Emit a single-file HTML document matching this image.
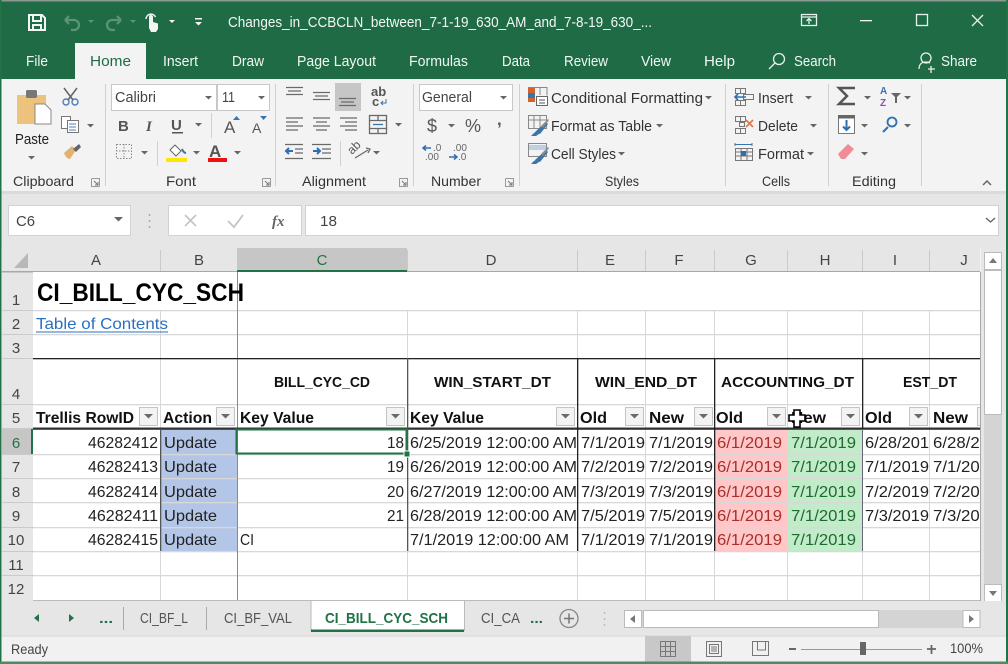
<!DOCTYPE html>
<html><head><meta charset="utf-8">
<style>
html,body{margin:0;padding:0;width:1008px;height:664px;overflow:hidden;background:#f3f3f3}
svg{display:block;filter:blur(.35px)}
text{font-family:"Liberation Sans",sans-serif;fill:#333;font-size:15px}
.w text{fill:#f2f7f4}
.c text{fill:#222;font-size:16px}
.b text{fill:#111;font-weight:bold;font-size:16px}
.r text{fill:#a8302c;font-size:16px}
.g text{fill:#1d6b2e;font-size:16px}
.h text{fill:#444;font-size:15px;text-anchor:middle}
.n text{fill:#444;font-size:15px;text-anchor:middle}
</style></head><body>
<svg width="1008" height="664" viewBox="0 0 1008 664" xmlns="http://www.w3.org/2000/svg">
<defs>
<clipPath id="grid"><rect x="33" y="272" width="947" height="329"/></clipPath>
<symbol id="dd" overflow="visible"><path d="M0 0h7l-3.500 3.500z" fill="#666"/></symbol>
<symbol id="fb" overflow="visible"><rect x=".5" y=".5" width="18" height="18" fill="#f3f3f3" stroke="#c4c4c4"/><path d="M5 7h9l-4.500 4.500z" fill="#6a6a6a"/></symbol>
<symbol id="lc" overflow="visible"><path d="M.5.5h8v8M.5.5v8h8" fill="none" stroke="#999"/><path d="M3 3l4 4M7 4v3H4" fill="none" stroke="#777"/></symbol>
</defs>

<!-- title bar -->
<rect width="1008" height="79" fill="#1e6b45"/>
<rect width="1008" height="1.500" fill="#8a9a90"/>
<rect x="75" y="43" width="71" height="37" fill="#f3f3f3"/>
<g fill="none" stroke="#f2f7f4" stroke-width="2">
<path d="M29 15h13l3 3v12H29zM33 15v6h8v-6M33 30v-5h8v5"/>
</g>
<g fill="none" stroke="#5b9478" stroke-width="2.200">
<path d="M65 20h9a5 5 0 0 1 0 10h-3M65 20l4-4M65 20l4 4"/>
<path d="M121 20h-9a5 5 0 0 0 0 10h3M121 20l-4-4M121 20l-4 4"/>
</g>
<path d="M88 20h6l-3 3zM130 20h6l-3 3z" fill="#5b9478"/>
<path d="M149 28V17a2 2 0 0 1 4 0v5l5 1.500V29l-2 3h-5z" fill="#f2f7f4"/>
<path d="M146 19a5 5 0 0 1 9.500-2" fill="none" stroke="#f2f7f4" stroke-width="1.500"/>
<path d="M169 20h6l-3 3zM195 22h7l-3.500 3.500z" fill="#f2f7f4"/>
<rect x="195" y="18" width="7" height="1.500" fill="#f2f7f4"/>
<g class="w">
<text x="228" y="27" textLength="424" lengthAdjust="spacingAndGlyphs">Changes_in_CCBCLN_between_7-1-19_630_AM_and_7-8-19_630_...</text>
<text x="26" y="66" textLength="22" lengthAdjust="spacingAndGlyphs">File</text>
<text x="163" y="66" textLength="35" lengthAdjust="spacingAndGlyphs">Insert</text>
<text x="232" y="66" textLength="32" lengthAdjust="spacingAndGlyphs">Draw</text>
<text x="297" y="66" textLength="79" lengthAdjust="spacingAndGlyphs">Page Layout</text>
<text x="409" y="66" textLength="59" lengthAdjust="spacingAndGlyphs">Formulas</text>
<text x="502" y="66" textLength="28" lengthAdjust="spacingAndGlyphs">Data</text>
<text x="564" y="66" textLength="44" lengthAdjust="spacingAndGlyphs">Review</text>
<text x="641" y="66" textLength="30" lengthAdjust="spacingAndGlyphs">View</text>
<text x="704" y="66" textLength="31" lengthAdjust="spacingAndGlyphs">Help</text>
<text x="794" y="66" textLength="42" lengthAdjust="spacingAndGlyphs">Search</text>
<text x="941" y="66" textLength="36" lengthAdjust="spacingAndGlyphs">Share</text>
</g>
<text x="90" y="66" textLength="41" lengthAdjust="spacingAndGlyphs" style="fill:#1e6b45">Home</text>
<g fill="none" stroke="#e8f0ec" stroke-width="1.300">
<circle cx="779" cy="59" r="5.500"/><path d="M775 63l-6 6"/>
<circle cx="926" cy="58" r="5"/><path d="M919 69c0-5 3-7 7-7 2 0 3 .500 4 1M931 66v7M928 69h7"/>
<rect x="801.500" y="14.500" width="15" height="11"/><path d="M801 17h16M809 24v-5M806.500 21l2.500-2.500 2.500 2.500"/>
<rect x="916.500" y="14.500" width="11" height="11"/>
<path d="M972 15l11 11M983 15l-11 11"/>
</g>
<rect x="860" y="20" width="12" height="1.300" fill="#f2f7f4"/>

<!-- ribbon -->
<rect y="79" width="1008" height="112" fill="#f3f3f3"/>
<rect y="191" width="1008" height="3" fill="#dadada"/>
<g fill="#d0d0d0">
<rect x="105" y="84" width="1" height="102"/><rect x="275" y="84" width="1" height="102"/>
<rect x="413" y="84" width="1" height="102"/><rect x="519" y="84" width="1" height="102"/>
<rect x="725" y="84" width="1" height="102"/><rect x="828" y="84" width="1" height="102"/>
<rect x="921" y="84" width="1" height="102"/>
<rect x="211" y="113" width="1" height="25"/><rect x="157" y="141" width="1" height="25"/><rect x="340" y="141" width="1" height="25"/>
</g>
<g>
<text x="13" y="186" textLength="61" lengthAdjust="spacingAndGlyphs" style="font-size:14px">Clipboard</text>
<text x="166" y="186" textLength="30" lengthAdjust="spacingAndGlyphs" style="font-size:14px">Font</text>
<text x="302" y="186" textLength="64" lengthAdjust="spacingAndGlyphs" style="font-size:14px">Alignment</text>
<text x="431" y="186" textLength="50" lengthAdjust="spacingAndGlyphs" style="font-size:14px">Number</text>
<text x="605" y="186" textLength="34" lengthAdjust="spacingAndGlyphs" style="font-size:14px">Styles</text>
<text x="762" y="186" textLength="28" lengthAdjust="spacingAndGlyphs" style="font-size:14px">Cells</text>
<text x="852" y="186" textLength="44" lengthAdjust="spacingAndGlyphs" style="font-size:14px">Editing</text>
</g>
<use href="#lc" x="91" y="178"/><use href="#lc" x="262" y="178"/><use href="#lc" x="399" y="178"/><use href="#lc" x="505" y="178"/>
<path d="M983 185l4-4 4 4" fill="none" stroke="#666" stroke-width="1.500"/>

<!-- clipboard -->
<path d="M17 95h29v29H17z" fill="#ecc27d"/>
<rect x="26" y="90" width="11" height="8" rx="1.500" fill="#777"/>
<path d="M35 104h10l6 6v14H35z" fill="#fff" stroke="#888"/>
<text x="15" y="144" textLength="34" lengthAdjust="spacingAndGlyphs" style="fill:#222">Paste</text>
<use href="#dd" x="28" y="156"/>
<g fill="none" stroke="#4d7fb5" stroke-width="1.400"><circle cx="66" cy="102" r="3"/><circle cx="75" cy="102" r="3"/></g>
<path d="M64 88l9 12M77 88l-9 12" stroke="#666" stroke-width="1.600"/>
<g fill="#fff" stroke="#777"><rect x="61.500" y="116.500" width="9" height="12"/><rect x="67.500" y="120.500" width="11" height="12"/></g>
<path d="M69 124h7M69 127h7M69 130h7" stroke="#4d7fb5"/>
<use href="#dd" x="87" y="124"/>
<path d="M64 153l8-7 4 4-6 9c-3 0-5-3-6-6z" fill="#e2b270"/><path d="M73 149l6-5 2 3-5 5z" fill="#666"/>

<!-- font -->
<rect x="111.500" y="84.500" width="105" height="26" fill="#fff" stroke="#c8c8c8"/>
<rect x="217.500" y="84.500" width="52" height="26" fill="#fff" stroke="#c8c8c8"/>
<text x="115" y="102" textLength="41" lengthAdjust="spacingAndGlyphs" style="fill:#444">Calibri</text>
<text x="222" y="102" textLength="13" lengthAdjust="spacingAndGlyphs" style="fill:#444">11</text>
<use href="#dd" x="205" y="96"/><use href="#dd" x="258" y="96"/>
<text x="118" y="131" style="font-weight:bold;font-size:15px;fill:#555">B</text>
<text x="146" y="131" style="font-style:italic;font-weight:bold;font-size:15px;fill:#555;font-family:'Liberation Serif',serif">I</text>
<text x="171" y="130" style="font-weight:bold;font-size:15px;fill:#555">U</text>
<rect x="172" y="132" width="11" height="1.500" fill="#555"/>
<use href="#dd" x="195" y="123"/>
<text x="224" y="133" style="font-size:17px;fill:#555">A</text><path d="M233 120h7l-3.500-4z" fill="#3b74ad"/>
<text x="252" y="133" style="font-size:14px;fill:#555">A</text><path d="M260 116h7l-3.500 4z" fill="#3b74ad"/>
<g fill="none" stroke="#888" stroke-dasharray="1.500 1.500"><rect x="116.500" y="144.500" width="15" height="14"/><path d="M124 144v15M116 151h16"/></g>
<use href="#dd" x="141" y="151"/>
<path d="M170 150l5-5 6 6-5 5z" fill="#fff" stroke="#666"/><path d="M182 149c1 3 3 4 4 4" stroke="#3b74ad" stroke-width="2" fill="none"/>
<rect x="166" y="158" width="21" height="4" fill="#ffe500"/>
<use href="#dd" x="193" y="151"/>
<text x="209" y="157" style="font-weight:bold;font-size:17px;fill:#555">A</text>
<rect x="208" y="158" width="19" height="4" fill="#f01010"/>
<use href="#dd" x="234" y="151"/>

<!-- alignment -->
<rect x="335" y="83" width="26" height="28" fill="#c6c6c6"/>
<g stroke="#6a6a6a" stroke-width="1.300" fill="none">
<path d="M286 87.500h17M288 91h13M286 94.500h17"/>
<path d="M313 92.500h17M315 96h13M313 99.500h17"/>
<path d="M339 98.500h17M341 102h13M339 105.500h17"/>
<path d="M286 118h17M286 122h12M286 126h17M286 130h12"/>
<path d="M313 118h17M316 122h11M313 126h17M316 130h11"/>
<path d="M340 118h17M345 122h12M340 126h17M345 130h12"/>
<rect x="369.500" y="115.500" width="17" height="18"/><path d="M370 120.500h16M370 128.500h16M378 116v4M378 129v4"/>
<path d="M285 144.500h18M295 149h8M295 153h8M285 158.500h18"/>
<path d="M312 144.500h19M322 149h9M322 153h9M312 158.500h19"/>
<path d="M355 158l13-8M366 148l4 1-2 4"/>
</g>
<path d="M373 124.500h10" stroke="#3b74ad" stroke-width="1.300"/>
<path d="M293 151h-7M289 148l-3 3 3 3M313 151h7M317 148l3 3-3 3" fill="none" stroke="#2d6fb0" stroke-width="2"/>
<text x="371" y="96" style="font-size:13px;font-weight:bold;fill:#555">ab</text>
<text x="372" y="106" style="font-size:13px;font-weight:bold;fill:#555">c</text>
<path d="M386 99v4h-5M383 101l-2 2 2 2" stroke="#3b74ad" fill="none"/>
<text x="0" y="0" transform="translate(352 155) rotate(-45)" style="font-size:12px;fill:#555">ab</text>
<use href="#dd" x="395" y="123"/><use href="#dd" x="373" y="151"/>

<!-- number -->
<rect x="419.500" y="84.500" width="93" height="26" fill="#fff" stroke="#c8c8c8"/>
<text x="422" y="102" textLength="50" lengthAdjust="spacingAndGlyphs" style="fill:#444">General</text>
<use href="#dd" x="500" y="96"/>
<text x="427" y="132" style="font-size:18px;fill:#555">$</text><use href="#dd" x="448" y="124"/>
<text x="465" y="132" style="font-size:18px;fill:#555">%</text>
<text x="497" y="125" style="font-size:17px;font-weight:bold;fill:#555">,</text>
<text x="433" y="151" style="font-size:10px;fill:#666">.0</text>
<text x="425" y="160" style="font-size:10px;fill:#666">.00</text>
<text x="453" y="151" style="font-size:10px;fill:#666">.00</text>
<text x="458" y="160" style="font-size:10px;fill:#666">.0</text>
<path d="M431 148h-8M426 145.500l-3 2.500 3 2.500M449 157h8M454 154.500l3 2.500-3 2.500" fill="none" stroke="#2d6fb0" stroke-width="1.500"/>

<!-- styles -->
<rect x="528" y="88" width="7" height="5" fill="#d2622f"/><rect x="528" y="93" width="7" height="5" fill="#3b74ad"/><rect x="528" y="98" width="7" height="4" fill="#d2622f"/>
<path d="M535 87.500h12v8M540 88v7M528 87.500h7" stroke="#888" fill="none"/>
<rect x="536.500" y="96.500" width="11" height="9" fill="#fff" stroke="#666"/><path d="M539 100h6M539 103h6" stroke="#555"/>
<g fill="none" stroke="#888"><rect x="528.500" y="115.500" width="18" height="13"/><path d="M528 120h18M534 116v12M540 116v12"/><rect x="528.500" y="143.500" width="18" height="13"/></g>
<rect x="529" y="145" width="17" height="5" fill="#bcd0e6"/>
<path d="M535 132l11-10 2 2-8 10zM533 134c2-3 5-2 6 0l-3 2h-5zM535 160l11-10 2 2-8 10zM533 162c2-3 5-2 6 0l-3 2h-5z" fill="#3b74ad"/>
<path d="M541 126l7-7 1 1-6 8zM541 154l7-7 1 1-6 8z" fill="#8a8a8a"/>
<text x="551" y="103" textLength="152" lengthAdjust="spacingAndGlyphs">Conditional Formatting</text>
<use href="#dd" x="705" y="96"/>
<text x="551" y="131" textLength="101" lengthAdjust="spacingAndGlyphs">Format as Table</text>
<use href="#dd" x="656" y="124"/>
<text x="551" y="159" textLength="65" lengthAdjust="spacingAndGlyphs">Cell Styles</text>
<use href="#dd" x="618" y="152"/>

<!-- cells -->
<g fill="none" stroke="#777">
<path d="M735.500 88.500h10v5h-10zM735.500 100.500h10v5h-10zM740.500 88v5M740.500 100v5"/>
<rect x="743.500" y="94.500" width="10" height="5"/>
<path d="M735.500 116.500h10v5h-10zM735.500 128.500h10v5h-10zM740.500 116v5M740.500 128v5M739.500 122.500h5v4h-5z"/>
<rect x="735.500" y="148.500" width="17" height="12"/><path d="M736 152h16M736 156h16M741 148v12M747 148v12"/>
</g>
<path d="M746 97h-11M738 94l-3 3 3 3" fill="none" stroke="#2d6fb0" stroke-width="1.600"/>
<path d="M746 120l7 7M753 120l-7 7" stroke="#dd7a4f" stroke-width="1.800"/>
<rect x="741" y="151" width="5" height="5" fill="#2d6fb0"/>
<path d="M735 144.500h17M735 143v3M752 143v3" stroke="#3b74ad"/>
<text x="758" y="103" textLength="35" lengthAdjust="spacingAndGlyphs">Insert</text><use href="#dd" x="805" y="96"/>
<text x="758" y="131" textLength="40" lengthAdjust="spacingAndGlyphs">Delete</text><use href="#dd" x="810" y="124"/>
<text x="758" y="159" textLength="46" lengthAdjust="spacingAndGlyphs">Format</text><use href="#dd" x="807" y="152"/>

<!-- editing -->
<path d="M855 88h-16l8 8-8 8h16" fill="none" stroke="#555" stroke-width="2.500"/>
<use href="#dd" x="864" y="96"/>
<text x="880" y="94" style="font-size:10px;font-weight:bold;fill:#3b74ad">A</text>
<text x="880" y="106" style="font-size:10px;font-weight:bold;fill:#8a4fb0">Z</text>
<path d="M891 93h10l-4 4v6h-2v-6z" fill="#666"/>
<use href="#dd" x="904" y="96"/>
<rect x="838.500" y="115.500" width="16" height="18" fill="#fff" stroke="#777"/><rect x="838" y="115" width="17" height="3.500" fill="#666"/>
<path d="M846.500 120v10M843 126.500l3.500 3.500 3.500-3.500" fill="none" stroke="#2d6fb0" stroke-width="2"/>
<use href="#dd" x="861" y="124"/>
<circle cx="892" cy="122" r="4.500" fill="none" stroke="#2d6fb0" stroke-width="1.800"/><path d="M888 127l-5 5" stroke="#2d6fb0" stroke-width="2"/>
<use href="#dd" x="904" y="124"/>
<path d="M838 154l10-10 6 5-9 10h-4z" fill="#ee8d97"/>
<use href="#dd" x="861" y="152"/>

<!-- formula bar -->
<rect y="194" width="1008" height="54" fill="#e6e6e6"/>
<rect x="8.500" y="205.500" width="122" height="30" fill="#fff" stroke="#d2d2d2"/>
<text x="16" y="226" textLength="19" lengthAdjust="spacingAndGlyphs" style="fill:#444">C6</text>
<path d="M114 217h9l-4.500 4.500z" fill="#666"/>
<path d="M149.500 214v2M149.500 220v2M149.500 226v2" stroke="#aaa" stroke-width="1.500"/>
<rect x="168.500" y="205.500" width="133" height="30" fill="#fff" stroke="#d2d2d2"/>
<rect x="305.500" y="205.500" width="693" height="30" fill="#fff" stroke="#d2d2d2"/>
<path d="M185 215l11 11M196 215l-11 11" stroke="#c4c4c4" stroke-width="1.600"/>
<path d="M228 221l6 6 9-12" stroke="#c4c4c4" stroke-width="1.800" fill="none"/>
<text x="272" y="226" style="font-family:'Liberation Serif',serif;font-style:italic;font-size:15px;font-weight:bold;fill:#666">fx</text>
<text x="320" y="226" textLength="17" lengthAdjust="spacingAndGlyphs" style="fill:#444">18</text>
<path d="M986 218l4.500 4 4.500-4" fill="none" stroke="#666" stroke-width="1.400"/>

<!-- headers -->
<rect x="2" y="248" width="978" height="24" fill="#e6e6e6"/>
<rect x="2" y="272" width="31" height="330" fill="#e6e6e6"/>
<rect x="2" y="271" width="978" height="1.500" fill="#a8a8a8"/>
<path d="M14 268h14v-15z" fill="#b8b8b8"/>
<rect x="237" y="248" width="170" height="24" fill="#c6c6c6"/>
<rect x="237" y="270" width="170" height="2.500" fill="#217346"/>
<g fill="#cacaca">
<rect x="160" y="250" width="1" height="21"/><rect x="407" y="250" width="1" height="21"/><rect x="577" y="250" width="1" height="21"/>
<rect x="645" y="250" width="1" height="21"/><rect x="714" y="250" width="1" height="21"/><rect x="787" y="250" width="1" height="21"/>
<rect x="862" y="250" width="1" height="21"/><rect x="929" y="250" width="1" height="21"/>
</g>
<g class="h">
<text x="96" y="265">A</text><text x="199" y="265">B</text><text x="322" y="265" style="fill:#217346">C</text><text x="491" y="265">D</text>
<text x="610" y="265">E</text><text x="679" y="265">F</text><text x="751" y="265">G</text><text x="825" y="265">H</text>
<text x="895" y="265">I</text><text x="964" y="265">J</text>
</g>
<rect x="2" y="429" width="31" height="25" fill="#c6c6c6"/>
<rect x="31" y="429" width="2" height="25" fill="#217346"/>
<g fill="#cacaca">
<rect x="2" y="310" width="31" height="1"/><rect x="2" y="334" width="31" height="1"/><rect x="2" y="358" width="31" height="1"/>
<rect x="2" y="404" width="31" height="1"/><rect x="2" y="428" width="31" height="1"/><rect x="2" y="454" width="31" height="1"/>
<rect x="2" y="478" width="31" height="1"/><rect x="2" y="502" width="31" height="1"/><rect x="2" y="527" width="31" height="1"/>
<rect x="2" y="551" width="31" height="1"/><rect x="2" y="575" width="31" height="1"/>
</g>
<g class="n">
<text x="16" y="305">1</text><text x="16" y="329">2</text><text x="16" y="353">3</text><text x="16" y="399">4</text><text x="16" y="423">5</text>
<text x="16" y="448" style="fill:#217346">6</text><text x="16" y="472">7</text><text x="16" y="497">8</text><text x="16" y="521">9</text><text x="16" y="545">10</text><text x="16" y="570">11</text><text x="16" y="594">12</text>
</g>

<!-- sheet -->
<rect x="33" y="272" width="947" height="329" fill="#fff"/>
<rect x="161" y="429" width="76" height="122" fill="#b4c6e7"/>
<rect x="714" y="429" width="73" height="122" fill="#ffc7c7"/>
<rect x="787" y="429" width="75" height="122" fill="#c2ebca"/>
<g fill="#d8d8d8">
<rect x="33" y="310" width="947" height="1.300"/>
<rect x="33" y="334" width="947" height="1.300"/>
<rect x="33" y="404" width="947" height="1.300"/>
<rect x="33" y="454" width="947" height="1.300"/><rect x="33" y="478" width="947" height="1.300"/><rect x="33" y="502" width="947" height="1.300"/>
<rect x="33" y="527" width="947" height="1.300"/><rect x="33" y="551" width="947" height="1.300"/><rect x="33" y="575" width="947" height="1.300"/>
<rect x="160" y="310" width="1" height="291"/><rect x="407" y="310" width="1" height="291"/><rect x="577" y="310" width="1" height="291"/>
<rect x="645" y="310" width="1" height="291"/><rect x="714" y="310" width="1" height="291"/><rect x="787" y="310" width="1" height="291"/>
<rect x="862" y="310" width="1" height="291"/><rect x="929" y="310" width="1" height="291"/>
</g>
<rect x="237" y="272" width="1" height="329" fill="#8a8a8a"/>
<rect x="33" y="358" width="947" height="1.300" fill="#222"/>
<rect x="33" y="427.500" width="947" height="2.300" fill="#333"/>
<rect x="160" y="429" width="1.300" height="122" fill="#555"/>
<rect x="407" y="358" width="1.300" height="193" fill="#555"/>
<rect x="577" y="358" width="1.300" height="193" fill="#222"/>
<rect x="714" y="358" width="1.300" height="193" fill="#222"/>
<rect x="862" y="358" width="1.300" height="71" fill="#222"/>
<rect x="862" y="429" width="1" height="122" fill="#667"/>
<rect x="980" y="272" width="1" height="329" fill="#a8a8a8"/>
<rect x="33" y="600" width="947" height="1" fill="#bbb"/>

<text x="37" y="301" textLength="207" lengthAdjust="spacingAndGlyphs" style="font-weight:bold;font-size:25px;fill:#000">CI_BILL_CYC_SCH</text>
<text x="36" y="329" textLength="132" lengthAdjust="spacingAndGlyphs" style="font-size:16px;fill:#2a70c0">Table of Contents</text>
<rect x="36" y="331.500" width="132" height="1" fill="#2a70c0"/>

<g clip-path="url(#grid)">
<g class="b">
<text x="274" y="387" textLength="96" lengthAdjust="spacingAndGlyphs" style="font-size:15px">BILL_CYC_CD</text>
<text x="434" y="387" textLength="117" lengthAdjust="spacingAndGlyphs" style="font-size:15px">WIN_START_DT</text>
<text x="595" y="387" textLength="102" lengthAdjust="spacingAndGlyphs" style="font-size:15px">WIN_END_DT</text>
<text x="721" y="387" textLength="133" lengthAdjust="spacingAndGlyphs" style="font-size:15px">ACCOUNTING_DT</text>
<text x="903" y="387" textLength="54" lengthAdjust="spacingAndGlyphs" style="font-size:15px">EST_DT</text>
<text x="36" y="423" textLength="98" lengthAdjust="spacingAndGlyphs">Trellis RowID</text>
<text x="163" y="423" textLength="49" lengthAdjust="spacingAndGlyphs">Action</text>
<text x="240" y="423" textLength="74" lengthAdjust="spacingAndGlyphs">Key Value</text>
<text x="410" y="423" textLength="74" lengthAdjust="spacingAndGlyphs">Key Value</text>
<text x="580" y="423" textLength="27" lengthAdjust="spacingAndGlyphs">Old</text>
<text x="649" y="423" textLength="35" lengthAdjust="spacingAndGlyphs">New</text>
<text x="716" y="423" textLength="27" lengthAdjust="spacingAndGlyphs">Old</text>
<text x="791" y="423" textLength="35" lengthAdjust="spacingAndGlyphs">New</text>
<text x="865" y="423" textLength="27" lengthAdjust="spacingAndGlyphs">Old</text>
<text x="933" y="423" textLength="35" lengthAdjust="spacingAndGlyphs">New</text>
</g>
<use href="#fb" x="139" y="407"/><use href="#fb" x="216" y="407"/><use href="#fb" x="386" y="407"/><use href="#fb" x="556" y="407"/>
<use href="#fb" x="625" y="407"/><use href="#fb" x="694" y="407"/><use href="#fb" x="767" y="407"/><use href="#fb" x="841" y="407"/>
<use href="#fb" x="909" y="407"/><use href="#fb" x="977" y="407"/>

<g class="c">
<text x="88" y="448" textLength="70" lengthAdjust="spacingAndGlyphs">46282412</text>
<text x="88" y="472" textLength="70" lengthAdjust="spacingAndGlyphs">46282413</text>
<text x="88" y="497" textLength="70" lengthAdjust="spacingAndGlyphs">46282414</text>
<text x="88" y="521" textLength="70" lengthAdjust="spacingAndGlyphs">46282411</text>
<text x="88" y="545" textLength="70" lengthAdjust="spacingAndGlyphs">46282415</text>
<text x="164" y="448" textLength="53" lengthAdjust="spacingAndGlyphs">Update</text>
<text x="164" y="472" textLength="53" lengthAdjust="spacingAndGlyphs">Update</text>
<text x="164" y="497" textLength="53" lengthAdjust="spacingAndGlyphs">Update</text>
<text x="164" y="521" textLength="53" lengthAdjust="spacingAndGlyphs">Update</text>
<text x="164" y="545" textLength="53" lengthAdjust="spacingAndGlyphs">Update</text>
<text x="387" y="448" textLength="17" lengthAdjust="spacingAndGlyphs">18</text>
<text x="387" y="472" textLength="17" lengthAdjust="spacingAndGlyphs">19</text>
<text x="387" y="497" textLength="17" lengthAdjust="spacingAndGlyphs">20</text>
<text x="387" y="521" textLength="17" lengthAdjust="spacingAndGlyphs">21</text>
<text x="240" y="545" textLength="14" lengthAdjust="spacingAndGlyphs">CI</text>
<text x="410" y="448" textLength="167" lengthAdjust="spacingAndGlyphs">6/25/2019 12:00:00 AM</text>
<text x="410" y="472" textLength="167" lengthAdjust="spacingAndGlyphs">6/26/2019 12:00:00 AM</text>
<text x="410" y="497" textLength="167" lengthAdjust="spacingAndGlyphs">6/27/2019 12:00:00 AM</text>
<text x="410" y="521" textLength="167" lengthAdjust="spacingAndGlyphs">6/28/2019 12:00:00 AM</text>
<text x="410" y="545" textLength="159" lengthAdjust="spacingAndGlyphs">7/1/2019 12:00:00 AM</text>
<text x="581" y="448" textLength="64" lengthAdjust="spacingAndGlyphs">7/1/2019</text><text x="649" y="448" textLength="64" lengthAdjust="spacingAndGlyphs">7/1/2019</text>
<text x="581" y="472" textLength="64" lengthAdjust="spacingAndGlyphs">7/2/2019</text><text x="649" y="472" textLength="64" lengthAdjust="spacingAndGlyphs">7/2/2019</text>
<text x="581" y="497" textLength="64" lengthAdjust="spacingAndGlyphs">7/3/2019</text><text x="649" y="497" textLength="64" lengthAdjust="spacingAndGlyphs">7/3/2019</text>
<text x="581" y="521" textLength="64" lengthAdjust="spacingAndGlyphs">7/5/2019</text><text x="649" y="521" textLength="64" lengthAdjust="spacingAndGlyphs">7/5/2019</text>
<text x="581" y="545" textLength="64" lengthAdjust="spacingAndGlyphs">7/1/2019</text><text x="649" y="545" textLength="64" lengthAdjust="spacingAndGlyphs">7/1/2019</text>
<text x="865" y="448" textLength="64" lengthAdjust="spacingAndGlyphs">6/28/201</text><text x="933" y="448" textLength="56" lengthAdjust="spacingAndGlyphs">6/28/20</text>
<text x="865" y="472" textLength="64" lengthAdjust="spacingAndGlyphs">7/1/2019</text><text x="933" y="472" textLength="56" lengthAdjust="spacingAndGlyphs">7/1/201</text>
<text x="865" y="497" textLength="64" lengthAdjust="spacingAndGlyphs">7/2/2019</text><text x="933" y="497" textLength="56" lengthAdjust="spacingAndGlyphs">7/2/201</text>
<text x="865" y="521" textLength="64" lengthAdjust="spacingAndGlyphs">7/3/2019</text><text x="933" y="521" textLength="56" lengthAdjust="spacingAndGlyphs">7/3/201</text>
</g>
<g class="r">
<text x="717" y="448" textLength="65" lengthAdjust="spacingAndGlyphs">6/1/2019</text>
<text x="717" y="472" textLength="65" lengthAdjust="spacingAndGlyphs">6/1/2019</text>
<text x="717" y="497" textLength="65" lengthAdjust="spacingAndGlyphs">6/1/2019</text>
<text x="717" y="521" textLength="65" lengthAdjust="spacingAndGlyphs">6/1/2019</text>
<text x="717" y="545" textLength="65" lengthAdjust="spacingAndGlyphs">6/1/2019</text>
</g>
<g class="g">
<text x="791" y="448" textLength="65" lengthAdjust="spacingAndGlyphs">7/1/2019</text>
<text x="791" y="472" textLength="65" lengthAdjust="spacingAndGlyphs">7/1/2019</text>
<text x="791" y="497" textLength="65" lengthAdjust="spacingAndGlyphs">7/1/2019</text>
<text x="791" y="521" textLength="65" lengthAdjust="spacingAndGlyphs">7/1/2019</text>
<text x="791" y="545" textLength="65" lengthAdjust="spacingAndGlyphs">7/1/2019</text>
</g>
</g>

<!-- selection -->
<rect x="236.500" y="429.500" width="170" height="24" fill="none" stroke="#217346" stroke-width="2"/>
<rect x="404" y="451" width="6" height="6" fill="#217346" stroke="#fff"/>
<!-- cursor -->
<path d="M794 410h6v5h5v6h-5v6h-6v-6h-5v-6h5z" fill="#fff" stroke="#000" stroke-width="1.600"/>

<!-- vertical scrollbar -->
<rect x="981" y="248" width="27" height="353" fill="#e6e6e6"/>
<rect x="984" y="252" width="18" height="349" fill="#d4d4d4"/>
<rect x="984.500" y="252.500" width="17" height="17" fill="#fff" stroke="#bbb"/>
<path d="M989 263h8l-4-5z" fill="#777"/>
<rect x="984.500" y="270.500" width="17" height="144" fill="#fff" stroke="#bbb"/>
<rect x="984.500" y="584.500" width="17" height="17" fill="#fff" stroke="#bbb"/>
<path d="M989 591h8l-4 5z" fill="#777"/>

<!-- tabs bar -->
<rect x="2" y="601" width="1004" height="35" fill="#e6e6e6"/>
<path d="M39 614v8l-5-4zM69 614v8l5-4z" fill="#217346"/>
<text x="99" y="623" style="font-weight:bold;font-size:14px;fill:#1e6b45" textLength="14" lengthAdjust="spacingAndGlyphs">...</text>
<rect x="123" y="607" width="1" height="23" fill="#aaa"/><rect x="206" y="607" width="1" height="23" fill="#aaa"/>
<text x="140" y="623" textLength="48" lengthAdjust="spacingAndGlyphs" style="fill:#555">CI_BF_L</text>
<text x="224" y="623" textLength="68" lengthAdjust="spacingAndGlyphs" style="fill:#555">CI_BF_VAL</text>
<rect x="311" y="601" width="153" height="29" fill="#fff"/>
<rect x="310.500" y="601" width="1" height="30" fill="#bbb"/><rect x="464" y="601" width="1" height="30" fill="#bbb"/>
<rect x="311" y="629.500" width="153" height="2.500" fill="#217346"/>
<text x="325" y="623" textLength="123" lengthAdjust="spacingAndGlyphs" style="font-weight:bold;fill:#217346">CI_BILL_CYC_SCH</text>
<text x="481" y="623" textLength="39" lengthAdjust="spacingAndGlyphs" style="fill:#555">CI_CA</text>
<text x="530" y="623" textLength="13" lengthAdjust="spacingAndGlyphs" style="font-weight:bold;font-size:14px;fill:#1e6b45">...</text>
<circle cx="569" cy="618.500" r="9" fill="none" stroke="#888" stroke-width="1.300"/>
<path d="M564 618.500h10M569 613.500v10" stroke="#777" stroke-width="1.500"/>
<path d="M604.500 612v2M604.500 618v2M604.500 624v2" stroke="#bbb" stroke-width="1.500"/>
<rect x="624" y="610" width="356" height="18" fill="#d4d4d4"/>
<rect x="624.500" y="610.500" width="17" height="17" fill="#fff" stroke="#bbb"/>
<path d="M635 615v8l-5-4z" fill="#777"/>
<rect x="643.500" y="610.500" width="235" height="17" fill="#fff" stroke="#bbb"/>
<rect x="963" y="610.500" width="17" height="17" fill="#fff" stroke="#bbb"/>
<path d="M969 615v8l5-4z" fill="#777"/>

<!-- status bar -->
<rect x="2" y="636" width="1004" height="26" fill="#f1f1f1"/>
<rect x="2" y="635.500" width="1004" height="1" fill="#d8d8d8"/>
<text x="11" y="654" textLength="37" lengthAdjust="spacingAndGlyphs" style="font-size:14px;fill:#444">Ready</text>
<rect x="645" y="636" width="46" height="26" fill="#c8c8c8"/>
<g fill="none" stroke="#777">
<rect x="660.500" y="641.500" width="15" height="15"/><path d="M665.500 642v14M670.500 642v14M661 646.500h14M661 651.500h14"/>
<rect x="706.500" y="641.500" width="15" height="15"/><rect x="709.500" y="644.500" width="9" height="9"/><path d="M711 647h6M711 649h6M711 651h6"/>
<rect x="752.500" y="641.500" width="16" height="14"/><path d="M757.500 642v8h8v-8"/>
</g>
<path d="M789 649h7" stroke="#666" stroke-width="2"/>
<rect x="801" y="649" width="121" height="1" fill="#999"/>
<rect x="860" y="642" width="6" height="13" fill="#666"/>
<path d="M927 649h9M931.500 645v9" stroke="#666" stroke-width="1.800"/>
<text x="950" y="653" textLength="33" lengthAdjust="spacingAndGlyphs" style="font-size:14px;fill:#444">100%</text>

<!-- window border -->
<rect x="0" y="0" width="1.500" height="664" fill="#217346"/>
<rect x="1006" y="0" width="2" height="664" fill="#217346"/>
<rect x="0" y="661.500" width="1008" height="2.500" fill="#4c8a6a"/>
</svg>
</body></html>
